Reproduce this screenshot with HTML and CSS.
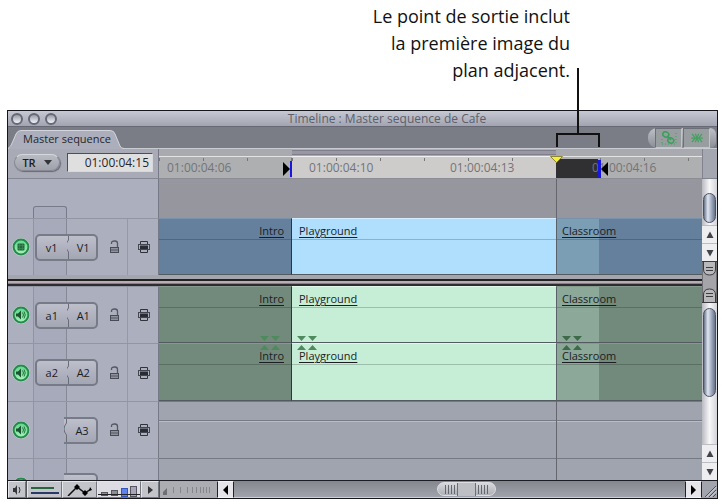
FILE: index.html
```html
<!doctype html>
<html lang="fr">
<head>

    <meta charset="utf-8">
    <title>Timeline</title>
    <link rel="stylesheet" href="styles.css">

</head>
<body>

<!-- shared icons -->
<svg class="defs" width="0" height="0">
    <defs>
        <linearGradient id="green" x1="0" y1="0" x2="0" y2="1">
            <stop offset="0" stop-color="#5fd58a"/>
            <stop offset="1" stop-color="#a4f3b9"/>
        </linearGradient>
        <symbol id="led" viewBox="0 0 20 20">
            <circle cx="10" cy="10" r="9" fill="#c8d5d2"/>
            <circle cx="10" cy="10" r="7.4" fill="url(#green)" stroke="#268a4d" stroke-width="2"/>
        </symbol>
        <symbol id="film" viewBox="0 0 20 20">
            <use href="#led"/>
            <rect x="6.500" y="6.500" width="7" height="7" rx="1" fill="#236a3a"/>
            <path d="M7 8.500h6M7 11.500h6M8.500 7v6M11.500 7v6" stroke="#438f5c" stroke-width=".6"/>
        </symbol>
        <symbol id="speaker" viewBox="0 0 20 20">
            <use href="#led"/>
            <path d="M5 8.500h2l3-3v9l-3-3h-2z" fill="#1c5330"/>
            <path d="M11.500 7.500q2 2.500 0 5M13 6.500q2.500 3.500 0 7" fill="none" stroke="#28703f" stroke-width="1"/>
        </symbol>
        <symbol id="lock" viewBox="0 0 12 14">
            <path d="M2.500 4V3q0-2 3-2h.5q2.500 0 2.500 2.500V7" fill="none" stroke="#555862" stroke-width="1.300"/>
            <rect x="1.500" y="7.500" width="8" height="5" fill="#8f929d" stroke="#484b55"/>
            <path d="M2 10h7" stroke="#555862"/>
        </symbol>
        <symbol id="sync" viewBox="0 0 14 14">
            <path d="M3.500 4V1.500h7V4M3.500 10v2.500h7V10" fill="none" stroke="#30333b"/>
            <path d="M1 4.500h12M1 9.500h12M1.500 4v6M12.500 4v6" fill="none" stroke="#444751"/>
            <path d="M3 5.500h8v3.500H3z" fill="#292c33"/>
        </symbol>
        <symbol id="notch" viewBox="0 0 4 26">
            <path d="M3.500 0V6Q1 9 1 12T3.500 18V26" fill="none" stroke="#696c79"/>
        </symbol>
        <symbol id="down" viewBox="0 0 20 5"><path d="M0 0h9l-4.500 5zM11 0h9l-4.500 5z"/></symbol>
        <symbol id="up" viewBox="0 0 20 5"><path d="M0 5h9l-4.500-5zM11 5h9l-4.500-5z"/></symbol>
        <symbol id="arrow-up" viewBox="0 0 8 8"><path d="M0.500 7h7L4 0.500z" fill="#41434a"/></symbol>
        <symbol id="arrow-down" viewBox="0 0 8 8"><path d="M0.500 1h7L4 7.500z" fill="#41434a"/></symbol>
    </defs>
</svg>

<p class="callout">Le point de sortie inclut<br>la première image du<br>plan adjacent.</p>

<div class="window">

    <header class="titlebar">
        <div class="lights">
            <button aria-label="Close"></button>
            <button aria-label="Minimize"></button>
            <button aria-label="Zoom"></button>
        </div>
        <h1>Timeline : Master sequence de Cafe</h1>
    </header>

    <nav class="tabbar">
        <button class="tab">
            <svg width="116" height="19" viewBox="0 0 116 19">
                <path d="M0 19Q3 17 5 11L8 4Q9.500 .5 13 .5H102Q106 .5 107 4L112 16Q113 18.500 116 18.500V19z" fill="#acafbb"/>
                <path d="M0 18.500Q3 17 5 11L8 4Q9.500 .5 13 .5H102Q106 .5 107 4L112 16Q113 18.500 116 18.500" fill="none" stroke="#d3d5de"/>
            </svg>
            <span>Master sequence</span>
        </button>
        <div class="tools">
            <button aria-label="Linked selection">
                <svg width="16" height="14" viewBox="0 0 16 14" fill="none" stroke="#39a05a">
                    <rect x="2" y="1" width="6" height="5" rx="2.500" transform="rotate(25 5 3)" stroke-width="1.600"/>
                    <rect x="7" y="7" width="6" height="5" rx="2.500" transform="rotate(25 10 9)" stroke-width="1.600"/>
                    <path d="M6 5l4 4" stroke-width="1.600"/>
                    <path d="M1 13h14M15 2v10M1 8v5" stroke-dasharray="1 2"/>
                </svg>
            </button>
            <button aria-label="Snapping">
                <svg width="14" height="10" viewBox="0 0 14 12" fill="none" stroke="#45a061" stroke-width="1.500">
                    <path d="M1 1l4 5-4 5M5 1l2 5-2 5M13 1L9 6l4 5M9 1L7 6l2 5M0 6h14"/>
                </svg>
            </button>
        </div>
    </nav>

    <main class="main">
        <div class="tracks">

            <div class="track ruler-row">
                <div class="head controls">
                    <button class="rt">TR
                        <svg width="8" height="5" viewBox="0 0 8 5"><path d="M0 0h8L4 5z" fill="#33353b"/></svg>
                    </button>
                    <input type="text" aria-label="Timecode" value="01:00:04:15">
                </div>
                <div class="ruler lane">
                    <div class="mark"><span>01:00:04:06</span></div>
                    <div class="mark inside">
                        <svg class="in-point" width="9" height="16" viewBox="0 0 9 16">
                            <path d="M0 1l7 7-7 7z"/><path d="M7 0h2v16H7z" fill="#1717e0"/>
                        </svg>
                        <span>01:00:04:10</span><span>01:00:04:13</span>
                    </div>
                    <div class="mark outside">
                        <div class="frame"></div>
                        <span>01:00:04:16</span>
                        <svg class="out-point" width="10" height="18" viewBox="0 0 10 18">
                            <path d="M10 2v14L3 9z"/><path d="M0 0h3v18H0z" fill="#1717e0"/>
                        </svg>
                        <svg class="playhead" width="13" height="7" viewBox="0 0 13 7">
                            <path d="M.5 .5h12L6.500 6.500z" fill="#f6ef3d" stroke="#8c8730"/>
                        </svg>
                        <svg class="bracket" width="44" height="80" viewBox="0 0 44 80">
                            <path d="M22 0V66M1 79V66H43V79" fill="none" stroke="#111" stroke-width="2"/>
                        </svg>
                    </div>
                </div>
            </div>

            <div class="track blank">
                <div class="head"><div class="stub"></div></div>
                <div class="lane"><div class="rest"></div></div>
            </div>

            <div class="track video">
                <div class="head">
                    <button class="led" aria-label="V1"><svg width="20" height="20"><use href="#film"/></svg></button>
                    <div class="patch">
                        <button>v1</button>
                        <button><svg width="4" height="26"><use href="#notch"/></svg>V1</button>
                    </div>
                    <button class="icon" aria-label="Lock"><svg width="12" height="14"><use href="#lock"/></svg></button>
                    <button class="icon" aria-label="Auto select"><svg width="14" height="14"><use href="#sync"/></svg></button>
                </div>
                <div class="lane">
                    <div class="clip intro"><span>Intro</span></div>
                    <div class="clip selected"><span>Playground</span></div>
                    <div class="clip room"><span>Classroom</span></div>
                </div>
            </div>

            <div class="divider"></div>

            <div class="track audio">
                <div class="head">
                    <button class="led" aria-label="A1"><svg width="20" height="20"><use href="#speaker"/></svg></button>
                    <div class="patch">
                        <button>a1</button>
                        <button><svg width="4" height="26"><use href="#notch"/></svg>A1</button>
                    </div>
                    <button class="icon" aria-label="Lock"><svg width="12" height="14"><use href="#lock"/></svg></button>
                    <button class="icon" aria-label="Auto select"><svg width="14" height="14"><use href="#sync"/></svg></button>
                </div>
                <div class="lane">
                    <div class="clip intro"><span>Intro</span><svg class="pair down"><use href="#down"/></svg></div>
                    <div class="clip selected"><span>Playground</span><svg class="pair down"><use href="#down"/></svg></div>
                    <div class="clip room"><span>Classroom</span><svg class="pair down"><use href="#down"/></svg></div>
                </div>
            </div>

            <div class="track audio second">
                <div class="head">
                    <button class="led" aria-label="A2"><svg width="20" height="20"><use href="#speaker"/></svg></button>
                    <div class="patch">
                        <button>a2</button>
                        <button><svg width="4" height="26"><use href="#notch"/></svg>A2</button>
                    </div>
                    <button class="icon" aria-label="Lock"><svg width="12" height="14"><use href="#lock"/></svg></button>
                    <button class="icon" aria-label="Auto select"><svg width="14" height="14"><use href="#sync"/></svg></button>
                </div>
                <div class="lane">
                    <div class="clip intro"><span>Intro</span><svg class="pair up"><use href="#up"/></svg></div>
                    <div class="clip selected"><span>Playground</span><svg class="pair up"><use href="#up"/></svg></div>
                    <div class="clip room"><span>Classroom</span><svg class="pair up"><use href="#up"/></svg></div>
                </div>
            </div>

            <div class="track empty">
                <div class="head">
                    <button class="led" aria-label="A3"><svg width="20" height="20"><use href="#speaker"/></svg></button>
                    <div class="patch single">
                        <button><svg width="4" height="26"><use href="#notch"/></svg>A3</button>
                    </div>
                    <button class="icon" aria-label="Lock"><svg width="12" height="14"><use href="#lock"/></svg></button>
                    <button class="icon" aria-label="Auto select"><svg width="14" height="14"><use href="#sync"/></svg></button>
                </div>
                <div class="lane"><div class="rest"></div></div>
            </div>

            <div class="track empty cut">
                <div class="head">
                    <button class="led" aria-label="A4"><svg width="20" height="20"><use href="#speaker"/></svg></button>
                    <div class="patch single"><button aria-label="Patch"></button></div>
                </div>
                <div class="lane"><div class="rest"></div></div>
            </div>

        </div>

        <div class="side">
            <div class="corner"></div>
            <div class="vscroll top"><div class="thumb"></div></div>
            <button class="arrow" aria-label="Up"><svg width="8" height="8"><use href="#arrow-up"/></svg></button>
            <button class="arrow" aria-label="Down"><svg width="8" height="8"><use href="#arrow-down"/></svg></button>
            <div class="splitter">
                <svg width="15" height="42" viewBox="0 0 15 42" fill="#b9b9bb" stroke="#3b3b40">
                    <path d="M0 0h15v42H0z" fill="#a5a5a9"/>
                    <path d="M1.500 1v7q0 6 6 6t6-6V1M1.500 41v-7q0-6 6-6t6 6v7M0 .5h15M0 41.500h15"/>
                    <path d="M4 6.500h7M4 9.500h7M4 32.500h7M4 35.500h7"/>
                </svg>
            </div>
            <div class="vscroll bottom"><div class="thumb"></div></div>
            <button class="arrow" aria-label="Up"><svg width="8" height="8"><use href="#arrow-up"/></svg></button>
            <button class="arrow" aria-label="Down"><svg width="8" height="8"><use href="#arrow-down"/></svg></button>
        </div>
    </main>

    <footer class="bottombar">
        <button class="b-small" aria-label="Audio controls">
            <svg width="12" height="12" viewBox="0 0 12 12"><path d="M2 4h2l2-3v10L4 8H2z" fill="#33353a"/><path d="M8 3q2 3 0 6" fill="none" stroke="#33353a"/></svg>
        </button>
        <button class="b-wide" aria-label="Clip keyframes">
            <svg width="28" height="10" viewBox="0 0 28 10"><path d="M0 3h23" stroke="#27663c" stroke-width="2"/><path d="M0 8h28" stroke="#293968" stroke-width="2"/></svg>
        </button>
        <button class="b-wide" aria-label="Clip overlays">
            <svg width="26" height="12" viewBox="0 0 26 12"><path d="M1 12L10 3l8 6 6-4" fill="none" stroke="#111" stroke-width="1.500"/><path d="M10 0l3 3-3 3-3-3zM18 6l3 3-3 3-3-3zM23 3l2 3-3 1z"/></svg>
        </button>
        <div class="heights">
            <svg width="42" height="15" viewBox="0 0 42 15" stroke="#55565e">
                <rect x="3.500" y="10.500" width="6" height="3" fill="#8d8d96"/>
                <rect x="13.500" y="8.500" width="6" height="5" fill="#8d8d96"/>
                <rect x="23.500" y="6.500" width="6" height="8" fill="#5f83ee" stroke="#3455bd"/>
                <rect x="32.500" y="4.500" width="6" height="10" fill="#a9a4bc"/>
                <path d="M0 12.500h42" stroke="#222"/>
            </svg>
        </div>
        <button class="b-small" aria-label="Track layout">
            <svg width="6" height="8" viewBox="0 0 6 8"><path d="M1 0l5 4-5 4z" fill="#34363c"/></svg>
        </button>
        <div class="zoomer">
            <svg width="54" height="14" viewBox="0 0 54 14">
                <path d="M3 12V9l4-4v7z" fill="#6e6f75"/>
                <path d="M13.500 4v6M20.500 4v6M27.500 4v6M32.500 4v6M36.500 4v6M40.500 4v6M43.500 4v6M46.500 4v6M49.500 4v6" stroke="#85868b"/>
            </svg>
        </div>
        <button class="b-arrow" aria-label="Left"><svg width="5" height="10" viewBox="0 0 5 10"><path d="M5 0v10L0 5z"/></svg></button>
        <div class="hscroll">
            <div class="hthumb"><i></i><b></b><i></i></div>
        </div>
        <button class="b-arrow" aria-label="Right"><svg width="5" height="10" viewBox="0 0 5 10"><path d="M0 0v10l5-5z"/></svg></button>
        <div class="grip">
            <svg width="15" height="17" viewBox="0 0 15 17"><path d="M3 16L14 5M7 16l7-7M11 16l3-3" stroke="#4e5058"/><path d="M4.500 16L14.500 6M8.500 16l6-6" stroke="#d9dae0"/></svg>
        </div>
    </footer>

</div>

</body>
</html>
```

FILE: styles.css
```css
* {
    box-sizing: border-box;
}

body {
    margin: 0;
    background: #fff;
    color: #1c1d22;
    font-family: "Open Sans", "Noto Sans", sans-serif;
    font-size: 11px;
}

button {
    margin: 0;
    padding: 0;
    border: 0;
    background: none;
    color: inherit;
    font: inherit;
}

svg {
    display: block;
    flex: none;
}

.defs {
    position: absolute;
}

.callout {
    margin: 0;
    padding: 3px 153px 26px 0;
    font-size: 18px;
    line-height: 27px;
    text-align: right;
    color: #111;
}

.window {
    margin: 0 5px 2px 7px;
    border: 1px solid #15151c;
    background: #acafbe;
}

/* title bar */

.titlebar {
    display: flex;
    align-items: center;
    height: 16px;
    border-bottom: 1px solid #666974;
    background: linear-gradient(#c6c9d2, #a2a5b1);
}

.titlebar h1 {
    flex: 1;
    margin: 0;
    font-size: 12px;
    font-weight: 500;
    line-height: 15px;
    text-align: center;
    color: #5d606b;
}

.lights {
    display: flex;
    gap: 5px;
    padding-left: 3px;
}

.lights button {
    width: 12px;
    height: 12px;
    border: 2px solid #656977;
    border-radius: 50%;
    background: linear-gradient(#989ba8, #f2f3f7);
}

/* tabs */

.tabbar {
    display: flex;
    justify-content: space-between;
    align-items: flex-end;
    height: 22px;
    background: #7a7c86;
    border-bottom: 1px solid #c9cbd2;
}

.tab {
    display: grid;
    width: 116px;
    height: 18px;
    color: #25262c;
    font-weight: 500;
}

.tab svg,
.tab span {
    grid-area: 1 / 1;
}

.tab span {
    padding-left: 2px;
    line-height: 18px;
}

.tools {
    display: flex;
    gap: 1px;
    align-self: flex-start;
    height: 20px;
    margin: 1px 1px 0 0;
    padding: 0 6px 0 7px;
    border-radius: 9px 6px 6px 9px;
    background: linear-gradient(#bfc1c8, #8b8d96);
}

.tools button {
    display: flex;
    align-items: center;
    justify-content: center;
    width: 27px;
    border: 1px solid #c2c5c8;
    border-top-color: #6d7078;
    border-left-color: #6d7078;
    background: #989e9f;
}

/* tracks */

.main {
    display: flex;
}

.tracks {
    flex: 1;
    min-width: 0;
}

.track {
    display: flex;
    height: 57px;
}

.head {
    display: flex;
    flex: none;
    align-items: center;
    width: 151px;
    border-top: 1px solid #9295a2;
    border-right: 1px solid #777a86;
    background:
        linear-gradient(#9093a1, #9093a1) 25px 0 / 1px 100% no-repeat,
        linear-gradient(#868996, #868996) 58px 0 / 1px 100% no-repeat,
        linear-gradient(#9598a5, #9598a5) 119px 0 / 1px 100% no-repeat,
        linear-gradient(#a7aabb, #a7aabb) 25px 0 / 33px 100% no-repeat,
        #acafbe;
}

.lane {
    display: grid;
    grid-template-columns: 133fr 264fr 146fr;
    flex: 1;
    min-width: 0;
    background: #a0a4ae;
}

.led {
    margin: 0 4px 0 3px;
}

.patch {
    display: flex;
    width: 63px;
    height: 27px;
    border: 2px solid #777a87;
    border-radius: 5px;
    background: linear-gradient(#bdc0cb, #a3a6b3);
    font-weight: 500;
}

.patch button {
    display: flex;
    align-items: center;
    flex: 1;
    justify-content: center;
    overflow: hidden;
}

.patch button svg {
    margin: 0 8px 0 -8px;
}

.patch.single {
    width: 34px;
    margin-left: 29px;
    border-left: 0;
    border-radius: 0 5px 5px 0;
}

.icon {
    display: flex;
    justify-content: center;
    width: 12px;
    margin-left: 11px;
}

.icon + .icon {
    width: 14px;
    margin-left: 16px;
}

/* ruler */

.ruler-row {
    height: 30px;
}

.controls {
    gap: 7px;
    padding: 0 0 2px 6px;
    border-top: 0;
    border-bottom: 1px solid #858894;
    background: #a8abb5;
}

.rt {
    display: flex;
    align-items: center;
    justify-content: center;
    gap: 8px;
    width: 46px;
    height: 17px;
    border: 1px solid #868993;
    border-top-color: #d5d7de;
    border-radius: 9px;
    background: linear-gradient(#b9bbc3, #a0a2ab);
    box-shadow: 1px 1px 1px #666974;
    font-weight: 600;
}

.controls input {
    width: 86px;
    height: 19px;
    padding: 0 3px;
    border: 1px solid #d8d9dc;
    border-top-color: #4d4f57;
    border-left-color: #4d4f57;
    border-radius: 0;
    background: #dfdfe0;
    color: #25262c;
    font: 12px "Open Sans", "Noto Sans", sans-serif;
    text-align: right;
}

.ruler {
    color: #747478;
    font-size: 12px;
}

.mark {
    position: relative;
    display: flex;
    align-items: flex-end;
    padding-left: 8px;
    background:
        repeating-linear-gradient(90deg, #77777a 0 1px, transparent 1px 44px) 0 9px / 100% 3px no-repeat,
        linear-gradient(#a8aab0 7px, #e3e3e3 7px 8px, #aeafb0 8px);
    border-bottom: 1px solid #8d8e95;
}

.mark span {
    line-height: 20px;
}

.mark.inside {
    padding-left: 17px;
    background:
        repeating-linear-gradient(90deg, #77777a 0 1px, transparent 1px 44px) 0 9px / 100% 3px no-repeat,
        linear-gradient(#b0aeba 1px, #807e8a 1px 2px, #9997a4 2px 5px, #807e8a 5px 6px, #aaa8b3 6px 7px, #f0f0f0 7px 8px, #cdcccb 8px);
}

.mark.inside span {
    width: 141px;
}

.mark.inside span:last-child {
    width: auto;
}

.mark.outside {
    padding-left: 36px;
}

.mark.outside span {
    position: relative;
}

.in-point {
    position: absolute;
    left: -9px;
    bottom: 1px;
}

.out-point {
    position: absolute;
    left: 42px;
    bottom: 0;
}

.frame {
    position: absolute;
    left: 0;
    bottom: 0;
    width: 42px;
    height: 19px;
    background: #303032;
}

.playhead {
    position: absolute;
    top: 7px;
    left: -6px;
}

.bracket {
    position: absolute;
    left: 0;
    bottom: 30px;
}

/* empty row above V1 */

.blank {
    height: 39px;
}

.blank .head {
    align-items: flex-end;
    padding-left: 25px;
    border-top: 0;
    background: #acafbe;
}

.stub {
    width: 34px;
    height: 12px;
    border: 1px solid #777a88;
    border-bottom: 0;
    border-radius: 3px 3px 0 0;
    background: #a7aabb;
}

.blank .lane {
    background: #96969f;
}

.rest {
    grid-column: 3;
    border-left: 1px solid #65666e;
}

/* clips */

.clip {
    position: relative;
    border-bottom: 1px solid #535a60;
}

.clip span {
    display: block;
    height: 21px;
    padding: 4px 7px 0;
    border-bottom: 1px solid #0003;
    font-weight: 500;
    line-height: 15px;
    text-decoration: underline;
    text-underline-offset: 2px;
}

.intro {
    border-right: 1px solid #31343b;
    text-align: right;
}

.room {
    border-left: 1px solid #5a6168;
}

.clip.room span {
    padding-left: 5px;
}

.video .clip {
    background: #65809d;
    border-top: 1px solid #7992ab;
}

.video .selected {
    background: #b0dffe;
    border-top-color: #d3edfc;
}

.video .room {
    background: linear-gradient(90deg, #7b9eb4 42px, #65809d 42px);
}

.audio .clip {
    background: #728a7b;
    border-top: 1px solid #849a8b;
}

.audio .selected {
    background: #c6eed7;
    border-top-color: #dff8e8;
}

.audio .room {
    background: linear-gradient(90deg, #8ba898 42px, #728a7b 42px);
}

.second {
    height: 58px;
}

.pair {
    position: absolute;
    left: 5px;
    width: 20px;
    height: 5px;
    fill: #4f8a5c;
}

.intro .pair {
    left: auto;
    right: 11px;
}

.room .pair {
    fill: #3d6a48;
}

.pair.down {
    bottom: 1px;
}

.pair.up {
    top: 1px;
}

.divider {
    height: 11px;
    background: linear-gradient(#a5a6ad 4px, #222 4px 6px, #b9adb5 6px 8px, #84808a 8px 9px, #2c2c31 9px);
}

.empty .lane {
    background: linear-gradient(#757984 1px, transparent 1px 19px, #777b85 19px 20px, #b9bdc4 20px 21px, transparent 21px), #a0a4ae;
}

.cut {
    height: 22px;
    overflow: hidden;
}

.cut .head {
    height: 55px;
}

.cut .lane {
    background: linear-gradient(#757984 1px, #a0a4ae 1px);
}

/* vertical scrollbars */

.side {
    display: flex;
    flex-direction: column;
    width: 15px;
    background: #e9eaee;
}

.corner {
    height: 30px;
    border-left: 1px solid #80828d;
    border-bottom: 1px solid #80828d;
    background: #a4a6b0;
}

.vscroll {
    padding: 0 1px;
    background: linear-gradient(90deg, #b9bac0, #f7f7f9 50%, #d3d4d8);
}

.vscroll.top {
    height: 46px;
    padding-top: 14px;
}

.vscroll.bottom {
    flex: 1;
    padding-top: 5px;
}

.thumb {
    height: 30px;
    border: 1px solid #4b5161;
    border-radius: 7px;
    background: linear-gradient(90deg, #687287, #e1e7f2 35%, #a4afc3 65%, #697288);
}

.bottom .thumb {
    height: 89px;
}

.arrow {
    display: flex;
    align-items: center;
    justify-content: center;
    height: 18px;
    border-top: 1px solid #bcbdc3;
    background: #eeeef1;
}

.splitter {
    height: 42px;
}

/* bottom bar */

.bottombar {
    display: flex;
    height: 18px;
    border-top: 1px solid #1c1d22;
    background: #55575f;
}

.bottombar button,
.heights {
    display: flex;
    align-items: center;
    justify-content: center;
    border: 1px solid #e5e6ea;
    border-right-color: #74767f;
    border-bottom-color: #74767f;
    background: #c3c4c9;
}

.bottombar .b-small {
    width: 18px;
    margin-right: 1px;
}

.bottombar .b-wide {
    width: 35px;
}

.heights {
    width: 44px;
    background: #dcdce2;
}

.zoomer {
    display: flex;
    align-items: center;
    width: 57px;
    background: #acadb2;
}

.bottombar .b-arrow {
    width: 17px;
    border-color: #f4f4f6 #222 #f4f4f6 #222;
    background: #e6e6ea;
}

.hscroll {
    display: flex;
    flex: 1;
    justify-content: center;
    padding: 1px 0;
    border-bottom: 1px solid #d0d1d6;
    background: linear-gradient(#85878f, #a1a3ac);
}

.hthumb {
    display: flex;
    align-items: center;
    justify-content: space-between;
    width: 59px;
    margin-left: 14px;
    padding: 0 7px;
    border: 1px solid #dddde1;
    border-radius: 8px;
    background: linear-gradient(#d8d8dd, #aeb0b7);
}

.hthumb i {
    width: 10px;
    height: 9px;
    background: repeating-linear-gradient(90deg, #65676f 0 1px, transparent 1px 3px);
}

.hthumb b {
    width: 19px;
    height: 13px;
    border: 1px solid #6d6f78;
    border-width: 0 1px;
    background: #bebfc5;
}

.grip {
    width: 15px;
    background: #a3a5ae;
}
```
